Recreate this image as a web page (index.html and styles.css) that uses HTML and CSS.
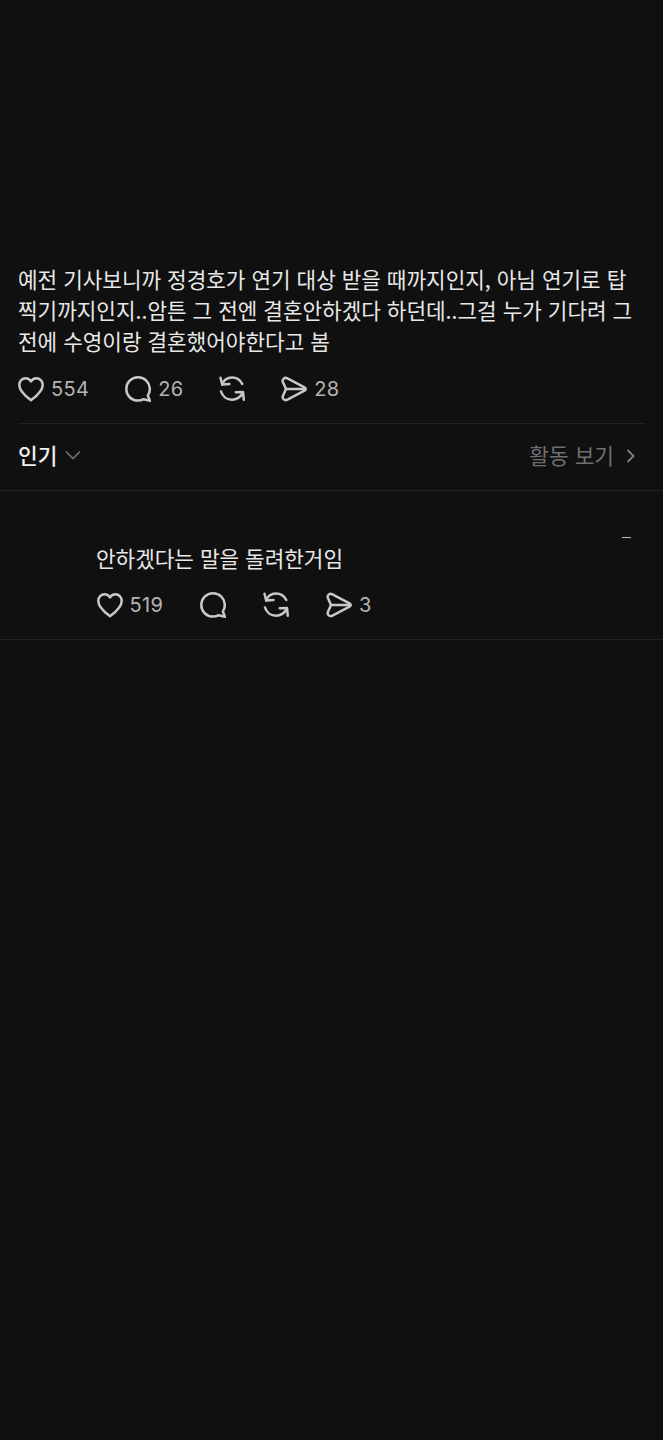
FILE: index.html
```html
<!DOCTYPE html>
<html lang="ko">
<head>
<meta charset="utf-8">
<title>스레드</title>
<link rel="stylesheet" href="styles.css">
</head>
<body>
<svg class="sprites" width="0" height="0" aria-hidden="true">
  <symbol id="i-heart" viewBox="0 0 26 26">
    <path d="M13 24.200C8.800 21 1.300 15.600 1.300 8.900 1.300 5 4.200 2.200 7.600 2.200c2.400 0 4.300 1.200 5.400 3.300 1.100-2.100 3-3.300 5.400-3.300 3.400 0 6.300 2.800 6.300 6.700 0 6.700-7.500 12.100-11.700 15.300Z"/>
  </symbol>
  <symbol id="i-comment" viewBox="0 0 26 26">
    <path d="M22.800 19.600c1.300-1.900 2-4.200 2-6.600C24.800 6.500 19.500 1.300 13 1.300S1.300 6.500 1.300 13 6.500 24.600 13 24.600c2 0 4-.5 5.600-1.400l6.400 1.600-2.200-5.200Z"/>
  </symbol>
  <symbol id="i-repost" viewBox="0 0 26 26">
    <path d="M3.200 8.500C4.800 4 8.500 1.500 13 1.500c4.600 0 8.300 2.600 10.300 6.500"/>
    <path d="M1.500 1.800 3.200 8.500 10.500 8"/>
    <path d="M2 15.500C3.500 20.500 8 23.700 13 23.700c4.600 0 8.500-2.700 10.800-6.800"/>
    <path d="M24.800 23.800 24 16 16.800 16.200"/>
  </symbol>
  <symbol id="i-send" viewBox="0 0 26 26">
    <path d="M6 2.200 23.500 11.300a1.900 1.900 0 0 1 0 3.400L6 23.800c-2.400 1.100-5-1-4.200-3.500L5 13 1.800 5.700C1 3.200 3.600 1.100 6 2.200Z"/>
    <path d="M5 13H24.500"/>
  </symbol>
</svg>

<main class="thread">
  <article class="post">
    <p class="post-text">예전 기사보니까 정경호가 연기 대상 받을 때까지인지, 아님 연기로 탑<br>찍기까지인지..암튼 그 전엔 결혼안하겠다 하던데..그걸 누가 기다려 그<br>전에 수영이랑 결혼했어야한다고 봄</p>
    <div class="actions">
      <span class="action"><svg class="icon"><use href="#i-heart"/></svg>554</span>
      <span class="action"><svg class="icon"><use href="#i-comment"/></svg>26</span>
      <span class="action"><svg class="icon"><use href="#i-repost"/></svg></span>
      <span class="action"><svg class="icon"><use href="#i-send"/></svg>28</span>
    </div>
  </article>

  <div class="sort-bar">
    <span class="sort"><b class="sort-label">인기</b><svg class="chevron-down" viewBox="0 0 16 10"><path d="M1 1.500 8 8.500l7-7"/></svg></span>
    <span class="activity">활동 보기<svg class="chevron-right" viewBox="0 0 9 14"><path d="M1.500 1 7.500 7l-6 6"/></svg></span>
  </div>

  <article class="reply">
    <span class="reply-more"></span>
    <p class="reply-text">안하겠다는 말을 돌려한거임</p>
    <div class="actions">
      <span class="action"><svg class="icon"><use href="#i-heart"/></svg>519</span>
      <span class="action"><svg class="icon"><use href="#i-comment"/></svg></span>
      <span class="action"><svg class="icon"><use href="#i-repost"/></svg></span>
      <span class="action"><svg class="icon"><use href="#i-send"/></svg>3</span>
    </div>
  </article>
</main>
</body>
</html>
```
FILE: styles.css
```css
html, body {
  margin: 0;
  background: #101010;
}

body {
  min-height: 1440px;
  color: #e8e8e8;
  font-family: "Noto Sans CJK KR", "Inter", sans-serif;
}

.sprites {
  position: absolute;
}

.post {
  padding: 263px 18px 0;
}

.post-text,
.reply-text {
  margin: 0;
  font-size: 21.3px;
  line-height: 31px;
  white-space: nowrap;
}

.actions {
  display: flex;
  gap: 36px;
  height: 30px;
  align-items: center;
  color: #b4b4b4;
  font-family: "Inter", sans-serif;
  font-size: 20px;
  letter-spacing: 0.3px;
}

.post .actions {
  margin-top: 18px;
  padding-bottom: 19px;
  border-bottom: 1px solid #222;
}

.action {
  display: flex;
  align-items: center;
  gap: 7px;
}

.icon {
  width: 26px;
  height: 26px;
  fill: none;
  stroke: #c8c8c8;
  stroke-width: 2.500;
  stroke-linejoin: round;
  stroke-linecap: round;
}

.sort-bar {
  display: flex;
  justify-content: space-between;
  align-items: center;
  box-sizing: border-box;
  height: 67px;
  padding: 0 28px 5px 18px;
  border-bottom: 1px solid #222;
  font-size: 21.4px;
}

.sort,
.activity {
  display: flex;
  align-items: center;
}

.sort-label {
  font-weight: 500;
  color: #eeeeee;
}

.chevron-down {
  width: 16px;
  height: 10px;
  margin-left: 8px;
  fill: none;
  stroke: #707070;
  stroke-width: 1.700;
}

.activity {
  color: #6f6f6f;
}

.chevron-right {
  width: 9px;
  height: 14px;
  margin-left: 12px;
  margin-top: 3px;
  fill: none;
  stroke: #808080;
  stroke-width: 1.800;
}

.reply {
  position: relative;
  padding: 51px 0 19px 96px;
  border-bottom: 1px solid #222;
}

.reply .actions {
  gap: 37px;
  margin-top: 17px;
  padding-left: 0.5px;
}

.reply-more {
  position: absolute;
  top: 46px;
  left: 622px;
  width: 9px;
  height: 1px;
  background: #bdbdbd;
}
```
